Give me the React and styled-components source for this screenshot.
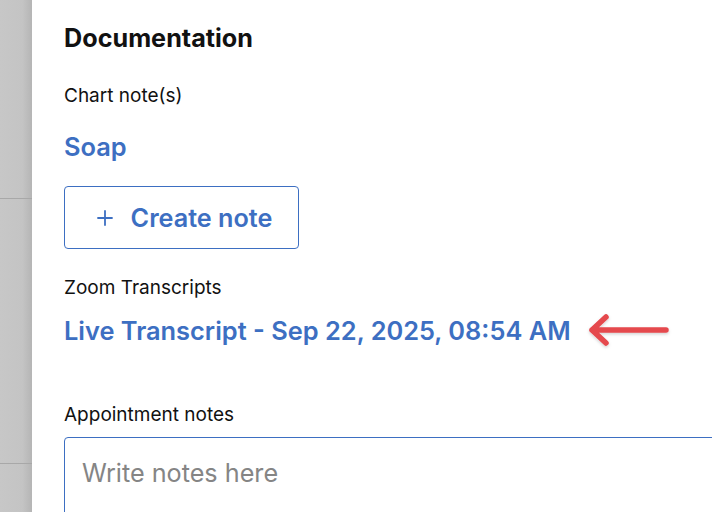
import React from "react";
import styled, { createGlobalStyle } from "styled-components";

const Global = createGlobalStyle`
  html, body { margin: 0; padding: 0; }
  body {
    width: 712px;
    height: 512px;
    overflow: hidden;
    background: #ffffff;
    font-family: Inter, "Noto Sans", sans-serif;
  }
`;

const Page = styled.div`
  display: flex;
  width: 712px;
  height: 512px;
  overflow: hidden;
`;

const Backdrop = styled.div`
  width: 32px;
  flex: none;
  background: linear-gradient(to right, #c7c7c7 0%, #c4c4c4 70%, #b5b5b5 100%);
  display: flex;
  flex-direction: column;
`;

const BackdropRow = styled.div`
  height: ${(p) => p.$h}px;
  flex: none;
  border-bottom: 1px solid #a8a8a8;
`;

const Panel = styled.div`
  flex: 1;
  min-width: 0;
  padding: 23px 0 0 32px;
  display: flex;
  flex-direction: column;
  & > * { flex-shrink: 0; }
`;

const Title = styled.h2`
  margin: 0;
  font-size: 25.2px;
  line-height: 30px;
  font-weight: 700;
  color: #111;
`;

const Label = styled.div`
  margin-top: ${(p) => p.$mt}px;
  font-size: 19px;
  line-height: 24px;
  color: #111;
`;

const Link = styled.a`
  display: block;
  margin-top: ${(p) => p.$mt}px;
  font-size: 25.4px;
  line-height: 30px;
  font-weight: 600;
  color: #3d6fc2;
  text-decoration: none;
  cursor: pointer;
  white-space: nowrap;
`;

const LinkRow = styled.div`
  display: flex;
  align-items: center;
  gap: 17px;
  height: 34px;
  margin-top: ${(p) => p.$mt}px;
`;

const CreateButton = styled.button`
  margin-top: 24px;
  align-self: flex-start;
  width: 235px;
  height: 63px;
  box-sizing: border-box;
  border: 1px solid #3d6fc2;
  border-radius: 4px;
  background: #fff;
  display: flex;
  align-items: center;
  justify-content: center;
  gap: 18px;
  font-family: inherit;
  font-size: 25.2px;
  font-weight: 600;
  color: #3d6fc2;
  cursor: pointer;
  padding: 0 0 0 6px;
`;

const NotesBox = styled.textarea`
  margin-top: 10px;
  width: 700px;
  height: 120px;
  box-sizing: border-box;
  border: 1px solid #3d6fc2;
  border-radius: 4px;
  padding: 20px 17px;
  font-family: inherit;
  font-size: 25.2px;
  line-height: 30px;
  color: #222;
  resize: none;
  outline: none;
  &::placeholder { color: #858585; }
`;

const PlusIcon = () => (
  <svg width="16" height="16" viewBox="0 0 16 16" fill="none">
    <path d="M8 1v14M1 8h14" stroke="#3d6fc2" strokeWidth="1.8" strokeLinecap="round" />
  </svg>
);

const ArrowIcon = () => (
  <svg width="84" height="34" viewBox="0 0 84 34" fill="none" style={{ overflow: "visible" }}>
    <defs>
      <filter id="sh" x="-10" y="-10" width="110" height="60" filterUnits="userSpaceOnUse">
        <feDropShadow dx="0" dy="1.5" stdDeviation="1.5" floodColor="#000" floodOpacity="0.18" />
      </filter>
    </defs>
    <g filter="url(#sh)">
      <path d="M78 16H4M4 16L18 3M4 16L18 29" stroke="#e5484d" strokeWidth="5.5" strokeLinecap="round" strokeLinejoin="round" />
    </g>
  </svg>
);

export default function App() {
  return (
    <>
      <Global />
      <Page>
        <Backdrop>
          <BackdropRow $h={198} />
          <BackdropRow $h={264} />
        </Backdrop>
        <Panel>
          <Title>Documentation</Title>
          <Label $mt={31}>Chart note(s)</Label>
          <Link $mt={24}>Soap</Link>
          <CreateButton>
            <PlusIcon />
            Create note
          </CreateButton>
          <Label $mt={27}>Zoom Transcripts</Label>
          <LinkRow $mt={14}>
            <Link $mt={0}>Live Transcript - Sep 22, 2025, 08:54 AM</Link>
            <ArrowIcon />
          </LinkRow>
          <Label $mt={55}>Appointment notes</Label>
          <NotesBox placeholder="Write notes here" />
        </Panel>
      </Page>
    </>
  );
}
